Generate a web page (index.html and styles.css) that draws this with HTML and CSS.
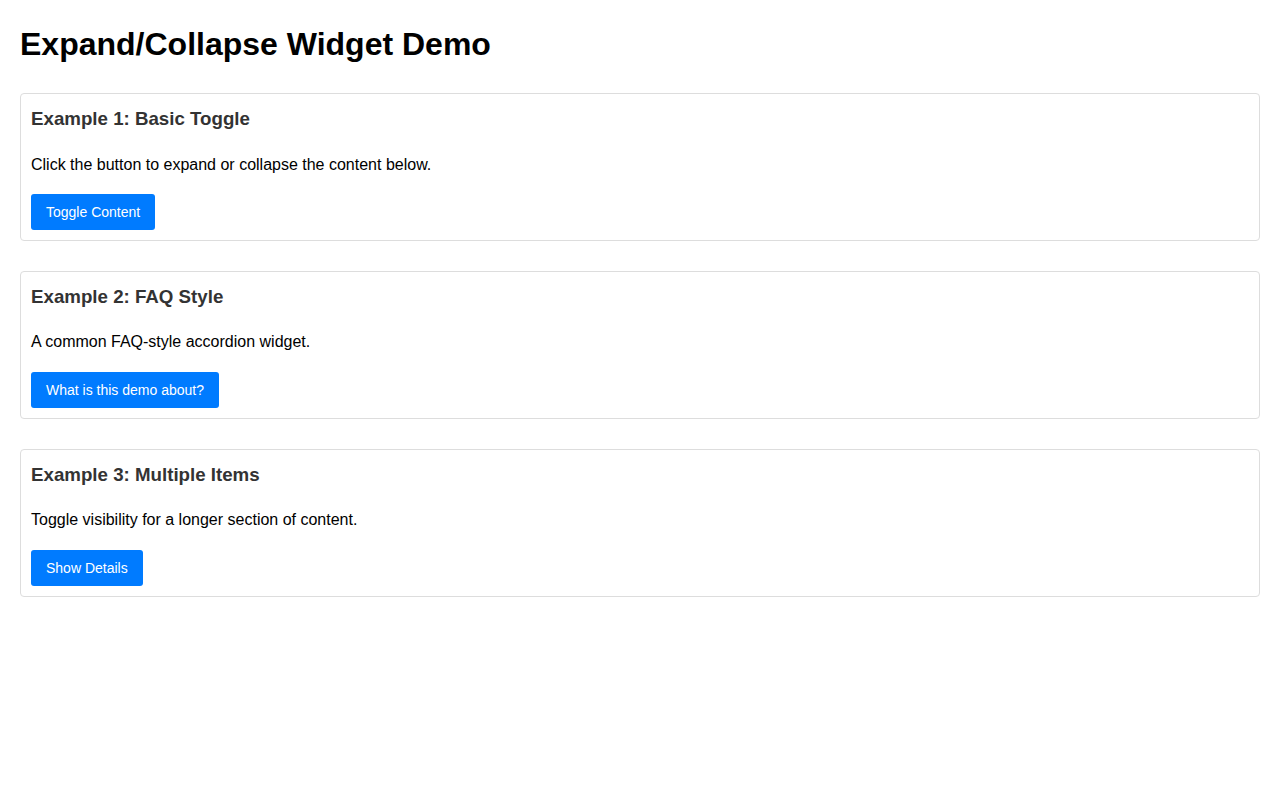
FILE: index.html
```html
<!DOCTYPE html>
<html>
<head>
<meta charset="utf-8">
<title>Expand/Collapse Widget Demo</title>
<link rel="stylesheet" href="styles.css">
</head>
<body>
<h1 class="title">Expand/Collapse Widget Demo</h1>
<div class="card">
  <h3 class="card-title">Example 1: Basic Toggle</h3>
  <p class="card-text">Click the button to expand or collapse the content below.</p>
  <button class="btn">Toggle Content</button>
</div>
<div class="card">
  <h3 class="card-title">Example 2: FAQ Style</h3>
  <p class="card-text">A common FAQ-style accordion widget.</p>
  <button class="btn">What is this demo about?</button>
</div>
<div class="card">
  <h3 class="card-title">Example 3: Multiple Items</h3>
  <p class="card-text">Toggle visibility for a longer section of content.</p>
  <button class="btn">Show Details</button>
</div>
</body>
</html>
```
FILE: styles.css
```css
body {
  margin: 0;
  padding: 20px;
  font-family: "Liberation Sans", Arial, sans-serif;
  font-size: 16px;
  color: #000;
  background: #fff;
}
.title {
  font-size: 32px;
  font-weight: bold;
  margin: 6px 0 30px;
  line-height: 37px;
}
.card {
  border: 1px solid #ddd;
  border-radius: 4px;
  padding: 10px;
  margin-bottom: 30px;
}
.card-title {
  font-size: 18.72px;
  font-weight: bold;
  color: #333;
  margin: 4px 0 0;
  line-height: 21.5px;
}
.card-text {
  margin: 26px 0 20px;
  line-height: 18.4px;
}
.btn {
  display: block;
  background: #007bff;
  color: #fff;
  border: none;
  border-radius: 3px;
  padding: 10px 15px;
  font-family: "Liberation Sans", Arial, sans-serif;
  font-size: 14px;
  line-height: 16px;
}
```
